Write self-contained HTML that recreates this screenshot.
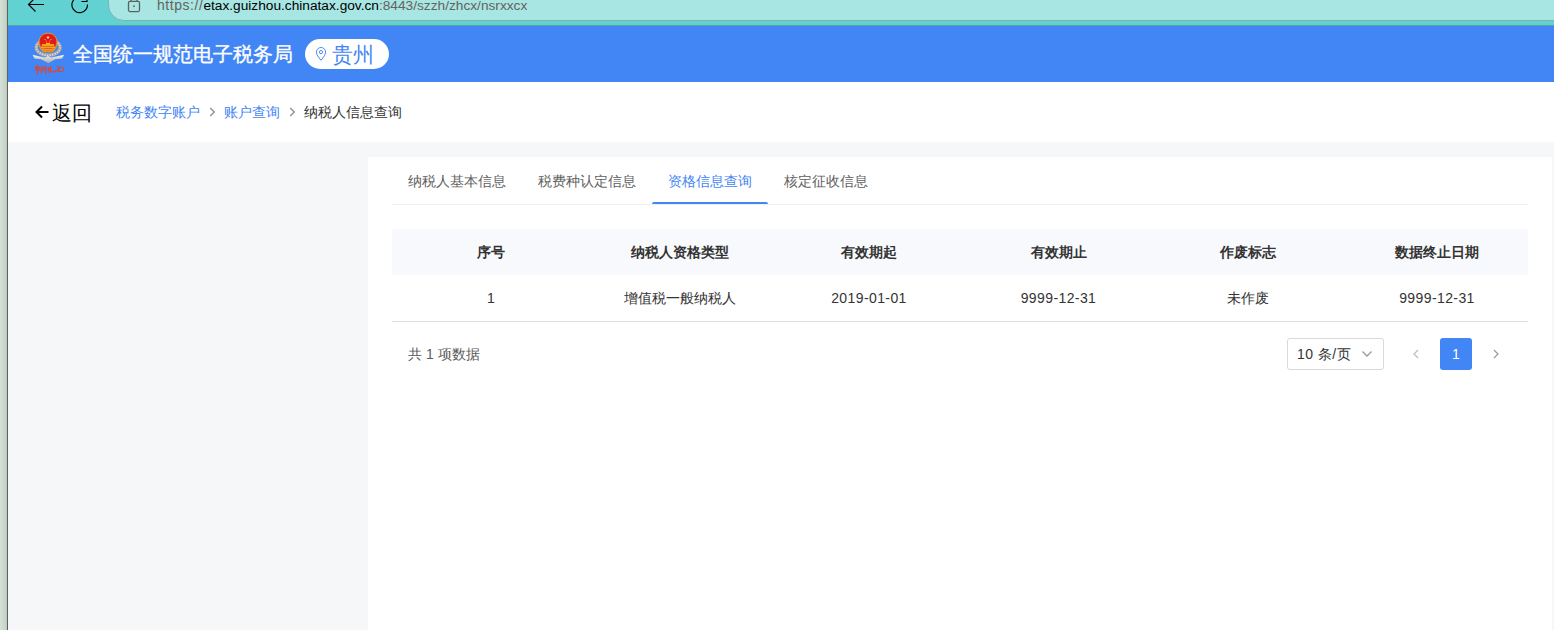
<!DOCTYPE html>
<html><head><meta charset="utf-8">
<style>
*{box-sizing:border-box;margin:0;padding:0}
html,body{width:1554px;height:630px;overflow:hidden;background:#fff;font-family:"Liberation Sans",sans-serif}
.abs{position:absolute}
#strip{left:0;top:0;width:7px;height:630px;background:linear-gradient(90deg,#d3e1d7,#c6d3c8 80%,#bdc9bf)}
#stripline{left:7px;top:0;width:1px;height:630px;background:#5d615e}
#toolbar{left:8px;top:0;width:1546px;height:26px;background:#62d1d2;border-bottom:1px solid #4fa8a8}
#addr{left:108px;top:-20px;width:1480px;height:41px;background:#a8e6e4;border-radius:16px;border:1px solid #7fb3b1}
#url{left:157px;top:-5px;font-size:14px;line-height:20px;color:#66625a;white-space:nowrap}
#url b{font-weight:normal;color:#000}
#header{left:8px;top:26px;width:1546px;height:56px;background:#4285f4}
#title{left:73px;top:40px;font-size:20px;line-height:28px;color:#fff;-webkit-text-stroke:0.35px #fff;white-space:nowrap}
#pill{left:305px;top:39px;width:84px;height:30px;border-radius:15px;background:#fff}
#pilltxt{left:332px;top:41px;font-size:20.5px;line-height:28px;color:#4285f4;white-space:nowrap}
#crumbbar{left:8px;top:82px;width:1546px;height:60px;background:#fff}
#back{left:52px;top:99px;font-size:20px;line-height:28px;color:#000;white-space:nowrap}
.bc{top:102px;font-size:14px;line-height:20px;white-space:nowrap}
#gray{left:8px;top:142px;width:1546px;height:488px;background:#f6f7f9}
#card{left:368px;top:157px;width:1184px;height:473px;background:#fff}
.tab{top:171px;font-size:14px;line-height:20px;color:#5f5f5f;white-space:nowrap}
#tabline{left:392px;top:204px;width:1136px;height:1px;background:#f0f0f0}
#ink{left:652px;top:202px;width:116px;height:2px;background:#4285f4;border-radius:2px 2px 0 0}
#thead{left:392px;top:229px;width:1136px;height:46px;background:#f8f9fc}
#rowline{left:392px;top:321px;width:1136px;height:1px;background:#dcdcdc}
.th{top:242px;font-size:14px;line-height:20px;color:#333;font-weight:bold;text-align:center;width:200px;white-space:nowrap}
.td{top:288px;font-size:14px;line-height:20px;color:#333;text-align:center;width:200px;white-space:nowrap}
.dg{letter-spacing:0.4px}
#total{left:408px;top:344px;font-size:14px;line-height:20px;color:#5a5a5a;white-space:nowrap}
#sel{left:1287px;top:338px;width:97px;height:32px;border:1px solid #d9d9d9;border-radius:3px;background:#fff}
#seltxt{left:1297px;top:344px;font-size:14px;letter-spacing:0.45px;line-height:20px;color:#333;white-space:nowrap}
#page1{left:1440px;top:338px;width:32px;height:32px;border-radius:3px;background:#4285f4;color:#fff;font-size:14px;line-height:32px;text-align:center}
</style></head><body>
<div class="abs" id="strip"></div>
<div class="abs" id="stripline"></div>
<div class="abs" id="toolbar"></div>
<div class="abs" id="addr"></div>
<!-- back arrow -->
<svg class="abs" style="left:24px;top:-4px" width="24" height="18" viewBox="0 0 24 18">
 <path d="M20 8.5H4.5M11.5 1.5L4.5 8.5L11.5 15.5" fill="none" stroke="#000" stroke-width="1.15"/>
</svg>
<!-- refresh -->
<svg class="abs" style="left:68px;top:-6px" width="24" height="22" viewBox="0 0 24 22">
 <path d="M19.5 10.5A7.8 7.8 0 1 1 8 4" fill="none" stroke="#000" stroke-width="1.15"/>
 <path d="M13.5 7.5H19V2" fill="none" stroke="#000" stroke-width="1.15"/>
</svg>
<!-- lock -->
<svg class="abs" style="left:126px;top:-4px" width="16" height="18" viewBox="0 0 16 18">
 <rect x="2.5" y="5.4" width="11" height="10.2" rx="1.5" fill="none" stroke="#5f5f5f" stroke-width="1.3"/>
 <path d="M5 5.5V3M11 5.5V3" stroke="#5f5f5f" stroke-width="1.3"/>
 <circle cx="8" cy="10.2" r="0.9" fill="#5f5f5f"/>
</svg>
<div class="abs" id="url"><span style="letter-spacing:0.55px">https://</span><span style="font-size:13.7px"><b>etax.guizhou.chinatax.gov.cn</b>:8443/szzh/zhcx/nsrxxcx</span></div>

<div class="abs" id="header"></div>
<!-- emblem -->
<svg class="abs" style="left:30px;top:30px" width="36" height="46" viewBox="0 0 36 46">
 <defs>
  <linearGradient id="wg" x1="0" y1="0" x2="0" y2="1"><stop offset="0" stop-color="#f2f2f2"/><stop offset="1" stop-color="#a9a9a9"/></linearGradient>
  <radialGradient id="rg" cx="0.5" cy="0.35" r="0.6"><stop offset="0" stop-color="#e8141e"/><stop offset="0.75" stop-color="#de1f1a"/><stop offset="1" stop-color="#f07a20"/></radialGradient>
 </defs>
 <ellipse cx="18.2" cy="17.4" rx="11.9" ry="7.9" fill="none" stroke="#a6a6a6" stroke-width="3.4"/><ellipse cx="18.2" cy="17.4" rx="11.9" ry="7.9" fill="none" stroke="#e0e0e0" stroke-width="1.6" stroke-dasharray="1.2 1.4"/>
 
 <path d="M2.6 24.8 L9 26.2 L15 27.6 L18 26 L21 27.6 L27 26.2 L34.3 24.8 L32 28.5 L25 29.2 L18.5 33.3 L11 29.2 L4.5 28.5 Z" fill="url(#wg)"/>
 <path d="M18 3.2 C23.5 3.2 27 7.2 27 12.3 C27 17 25 20.5 22 21.8 L14 21.8 C11 20.5 9 17 9 12.3 C9 7.2 12.5 3.2 18 3.2 Z" fill="url(#rg)" stroke="#f39a22" stroke-width="0.9"/>
 <rect x="12" y="14.2" width="12" height="1.6" fill="#f7c21c"/>
 <rect x="11" y="16.5" width="14" height="1.4" fill="#f5b31a"/>
 <rect x="12" y="18.6" width="12" height="1.8" fill="#f29a1c"/>
 <rect x="16" y="12.8" width="4" height="1.4" fill="#f7c21c"/>
 <circle cx="18" cy="7.4" r="1.2" fill="#f6e06a"/>
 <circle cx="15" cy="9.2" r="0.55" fill="#f6d04a"/><circle cx="21" cy="9.2" r="0.55" fill="#f6d04a"/>
 <circle cx="16.2" cy="10.9" r="0.5" fill="#f6d04a"/><circle cx="19.8" cy="10.9" r="0.5" fill="#f6d04a"/>
 <g fill="none" stroke="#e2432a" stroke-width="1.2" stroke-linecap="round">
  <path d="M5.5 37.5h4M7.5 35.2v9.2M5.8 37v3M9.5 37v3h-3.6"/>
  <path d="M11.4 37.3v5.5M11.4 37h4.5v6.3M12.8 38.9h2M13 41h1.6"/>
  <path d="M18.5 37.5v5M18 39.5l1.8-0.8M20.5 36.7l0.3 5.4 1.5-0.4M23 41.6h2.5"/>
  <path d="M25.8 40.6l3-0.4M27.5 36.5l1.5 2.5M30.5 36.5l-2 3.5M28 41.5h4.5M32.5 37.2l1 3"/>
 </g>
</svg>
<div class="abs" id="title">全国统一规范电子税务局</div>
<div class="abs" id="pill"></div>
<svg class="abs" style="left:315px;top:46px" width="12" height="16" viewBox="0 0 12 16">
 <path d="M6 14.3C3.3 11 1.4 8.6 1.4 6.1a4.6 4.6 0 0 1 9.2 0c0 2.5-1.9 4.9-4.6 8.2z" fill="none" stroke="#4285f4" stroke-width="0.95"/>
 <circle cx="6" cy="6.1" r="1.6" fill="none" stroke="#4285f4" stroke-width="0.95"/>
</svg>
<div class="abs" id="pilltxt">贵州</div>

<div class="abs" id="crumbbar"></div>
<svg class="abs" style="left:34px;top:104px" width="16" height="16" viewBox="0 0 16 16">
 <path d="M14.5 8H2.5M8 2.5L2.5 8L8 13.5" fill="none" stroke="#000" stroke-width="2"/>
</svg>
<div class="abs" id="back">返回</div>
<div class="abs bc" style="left:116px;color:#4285f4">税务数字账户</div>
<svg class="abs" style="left:208px;top:107px" width="8" height="10" viewBox="0 0 8 10"><path d="M2.2 0.9L6.3 5L2.2 9.1" fill="none" stroke="#8f8f8f" stroke-width="1.35"/></svg>
<div class="abs bc" style="left:224px;color:#4285f4">账户查询</div>
<svg class="abs" style="left:288px;top:107px" width="8" height="10" viewBox="0 0 8 10"><path d="M2.2 0.9L6.3 5L2.2 9.1" fill="none" stroke="#8f8f8f" stroke-width="1.35"/></svg>
<div class="abs bc" style="left:304px;color:#333">纳税人信息查询</div>

<div class="abs" id="gray"></div>
<div class="abs" id="card"></div>
<div class="abs tab" style="left:408px">纳税人基本信息</div>
<div class="abs tab" style="left:538px">税费种认定信息</div>
<div class="abs tab" style="left:668px;color:#4285f4">资格信息查询</div>
<div class="abs tab" style="left:784px">核定征收信息</div>
<div class="abs" id="tabline"></div>
<div class="abs" id="ink"></div>

<div class="abs" id="thead"></div>
<div class="abs th" style="left:391px">序号</div>
<div class="abs th" style="left:580px">纳税人资格类型</div>
<div class="abs th" style="left:769px">有效期起</div>
<div class="abs th" style="left:958.5px">有效期止</div>
<div class="abs th" style="left:1148px">作废标志</div>
<div class="abs th" style="left:1337px">数据终止日期</div>
<div class="abs td" style="left:391px">1</div>
<div class="abs td" style="left:580px">增值税一般纳税人</div>
<div class="abs td dg" style="left:769px">2019-01-01</div>
<div class="abs td dg" style="left:958.5px">9999-12-31</div>
<div class="abs td" style="left:1148px">未作废</div>
<div class="abs td dg" style="left:1337px">9999-12-31</div>
<div class="abs" id="rowline"></div>

<div class="abs" id="total">共 1 项数据</div>
<div class="abs" id="sel"></div>
<div class="abs" id="seltxt">10 条/页</div>
<svg class="abs" style="left:1361px;top:349px" width="12" height="10" viewBox="0 0 12 10"><path d="M1.5 2.5L6 7L10.5 2.5" fill="none" stroke="#999" stroke-width="1.25"/></svg>
<svg class="abs" style="left:1411px;top:349px" width="10" height="10" viewBox="0 0 10 10"><path d="M7 1L3 5L7 9" fill="none" stroke="#bdbdbd" stroke-width="1.2"/></svg>
<div class="abs" id="page1">1</div>
<svg class="abs" style="left:1491px;top:349px" width="10" height="10" viewBox="0 0 10 10"><path d="M3 1L7 5L3 9" fill="none" stroke="#999" stroke-width="1.2"/></svg>
</body></html>
